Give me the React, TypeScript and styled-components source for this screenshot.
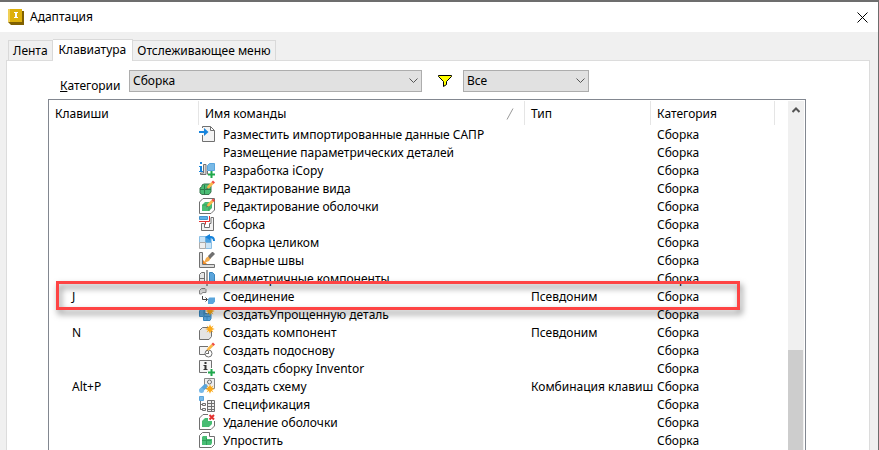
import React from "react";
import styled, { createGlobalStyle } from "styled-components";

const Global = createGlobalStyle`
  *, *::before, *::after { box-sizing: border-box; }
  html, body { margin: 0; height: 100%; overflow: hidden; }
  body, button, select { font: 12px/18px "Noto Sans", "Open Sans", Tahoma, sans-serif; color: #000; }
`;

const Window = styled.div`
  display: flex;
  flex-direction: column;
  height: 100vh;
  background: #f0f0f0;
  border-top: 2px solid #6d6d6d;
  border-right: 1px solid #6d6d6d;
`;

const TitleBar = styled.header`
  display: flex;
  align-items: center;
  gap: 6px;
  flex: none;
  height: 30px;
  padding: 0 9px 0 8px;
  background: #fff;
`;

const Title = styled.h1`
  flex: 1;
  margin: 0;
  font-size: 12px;
  font-weight: 400;
`;

const CloseButton = styled.button`
  display: grid;
  place-items: center;
  width: 14px;
  height: 16px;
  padding: 0;
  border: 0;
  background: none;
`;

const Body = styled.main`
  display: flex;
  flex-direction: column;
  flex: 1;
  min-height: 0;
  padding: 7px 8px 0 6px;
`;

const TabList = styled.div`
  display: flex;
  align-items: flex-end;
  flex: none;
  padding-left: 2px;
`;

const Tab = styled.button<{ $active?: boolean }>`
  height: ${(p) => (p.$active ? 22 : 20)}px;
  margin-bottom: ${(p) => (p.$active ? -1 : 0)}px;
  padding: ${(p) => (p.$active ? "0 6px 2px" : "1px 4px 0")};
  border: 1px solid #d9d9d9;
  border-bottom: 0;
  background: ${(p) => (p.$active ? "#fff" : "#f0f0f0")};
  white-space: nowrap;
  z-index: 1;
  & + & { border-left: 0; }
`;

const Panel = styled.section`
  display: flex;
  flex-direction: column;
  flex: 1;
  min-height: 0;
  padding: 9px 63px 0 41px;
  border: 1px solid #dcdcdc;
  border-bottom: 0;
  background: #fff;
`;

const Filters = styled.div`
  display: flex;
  align-items: center;
  flex: none;
  height: 22px;
  margin-bottom: 7px;
  padding-left: 12px;
`;

const FieldLabel = styled.label`
  width: 69px;
  padding-top: 10px;
`;

const SelectBox = styled.div<{ $width: number }>`
  display: grid;
  align-items: center;
  width: ${(p) => p.$width}px;
  & > * { grid-area: 1 / 1; }
  & > svg { justify-self: end; margin-right: 4px; pointer-events: none; }
`;

const Select = styled.select`
  width: 100%;
  height: 22px;
  padding: 0 3px;
  border: 1px solid #adadad;
  border-radius: 0;
  background: #e1e1e1;
  appearance: none;
`;

const FilterIcon = styled.svg`
  margin: 0 11px 0 16px;
`;

const ListBox = styled.div`
  display: flex;
  flex: 1;
  min-height: 0;
  padding: 1px 1px 0 0;
  border: 1px solid #828790;
  border-bottom: 0;
`;

const ListView = styled.div`
  flex: 1;
  min-width: 0;
  overflow: hidden;
`;

const Table = styled.table`
  width: 100%;
  table-layout: fixed;
  border-collapse: separate;
  border-spacing: 0;
`;

const Col = styled.col<{ $width?: number }>`
  width: ${(p) => (p.$width ? `${p.$width}px` : "auto")};
`;

const HeadCell = styled.th`
  height: 24px;
  padding: 2px 6px 0;
  border-right: 1px solid #e5e5e5;
  font-weight: 400;
  text-align: left;
  &:last-child { border-right: 0; }
`;

const HeadLabel = styled.span`
  display: flex;
  align-items: center;
  justify-content: space-between;
  padding-right: 4px;
`;

const Cell = styled.td<{ $indent?: boolean }>`
  position: relative;
  height: 18px;
  padding: 2px 0 0 ${(p) => (p.$indent ? 23 : 6)}px;
  line-height: 16px;
  white-space: nowrap;
`;

const CommandCell = styled(Cell)`
  padding: 0;
`;

const Command = styled.span`
  display: flex;
  align-items: center;
  gap: 8px;
  height: 18px;
`;

const CommandName = styled.span`
  padding-top: 2px;
`;

const Highlight = styled.span`
  position: absolute;
  z-index: 2;
  top: -6px;
  left: 7px;
  width: 684px;
  height: 29px;
  border: 3px solid #fe4444;
  filter: drop-shadow(2px 4px 3px rgba(0, 0, 0, 0.5));
  pointer-events: none;
`;

const ScrollBar = styled.div`
  display: flex;
  flex-direction: column;
  width: 16px;
  background: #f0f0f0;
`;

const ScrollButton = styled.button`
  display: grid;
  place-items: center;
  height: 17px;
  padding: 0;
  border: 0;
  background: none;
`;

const Track = styled.div`
  flex: 232;
`;

const Thumb = styled.div`
  flex: 100;
  width: 15px;
  background: #cdcdcd;
`;

const GREY = "#707070";
const GREEN = "#49bd74";
const BLUE = "#5aa5dc";

const Pencil = () => (
  <>
    <path d="M7.500 9l1-3 4-4 2 2-4 4z" fill="#f8b84c" />
    <path d="M12.500 2L14 .5l2 2L14.500 4z" fill="#f0483e" />
    <path d="M7 9.500l1-2 1 1z" fill="#555" />
  </>
);

const Star = ({ x, y }: { x: number; y: number }) => (
  <path
    transform={`translate(${x} ${y})`}
    d="M0-4.800L1.100-2 3.500-3.500 2-1.100 4.800 0 2 1.100 3.500 3.500 1.100 2 0 4.800-1.100 2-3.500 3.500-2 1.100-4.800 0-2-1.100-3.500-3.500-1.100-2z"
    fill="#fba919"
  />
);

const Plus = () => <path d="M9 12.500h7M12.500 9v7" stroke="#1fa84c" strokeWidth="2" fill="none" />;

const icons: Record<string, React.ReactNode> = {
  place: (
    <>
      <path d="M3.500 2V.5h8l4 4v11h-12V9M11.500.5v4h4" fill="#f4f4f4" stroke={GREY} />
      <path d="M0 5h5V2l4.500 4L5 10V7H0z" fill="#1784dc" />
    </>
  ),
  icopy: (
    <>
      <path d="M1 0h2v2H1zM0 4h3v5h1v1H0V9h1V5H0z" fill="#1784dc" />
      <path d="M4.500 2.500H7v10H1.500V11H4.500z" fill="#ddd" stroke={GREY} />
      <path d="M8.500 3.500l2-2h5v7h-7z" fill="#78b9e6" stroke={BLUE} />
      <path d="M8.500 9v3.500" stroke={GREY} />
      <Plus />
    </>
  ),
  editView: (
    <>
      <path d="M1 8l2-1.500V5l2-1h6l1 2v6l-2 2.500H3L1 13z" fill={GREEN} stroke="#39754e" />
      <path d="M1 9.500h4.500V14M5.500 9.500V5M6 9.500h6" fill="none" stroke="#2b7a49" />
      <Pencil />
    </>
  ),
  editShell: (
    <>
      <path d="M4 .5h11.500V12L12 15.500H.5V4z" fill="#fff" stroke={GREY} />
      <path d="M3 7l3-3h7v6l-3 3H3z" fill={GREEN} />
      <path d="M3.500 7H10v6" fill="none" stroke="#2f9f58" />
      <Pencil />
    </>
  ),
  assembly: (
    <>
      <path d="M.5.5h8v3h-8z" fill="#5fb1e8" stroke="#4594cc" />
      <path d="M0 5.500h6.500v3M10.500 0v5.500H6" fill="none" stroke="#e3312f" />
      <path d="M12 1.500h2.500v13h-12v-7h3v4h5v-4H12z" fill="#f2f2f2" stroke={GREY} />
    </>
  ),
  whole: (
    <>
      <path d="M.5 2.500h6v6h-6zM6.500 8.500h6v6h-6z" fill="#c9e3f6" stroke="#8bbfe4" />
      <path d="M6.500 2.500h6v6h-6z" fill="#4a9fdf" />
      <path d="M.5 8.500h6v6h-6z" fill="#eee" stroke="#aaa" />
      <path d="M6 3l5-3v2c3 0 5 1 5 5h-2c0-2-1-3-3-3v2z" fill="#1784dc" />
    </>
  ),
  weld: (
    <>
      <path d="M.5.5h3v12h12v3H.5z" fill="#ddd" stroke={GREY} />
      <path d="M4 12V8l4 4z" fill="#f08a24" />
      <path d="M5 11l2-5 3-2 2 2-2 3z" fill="#f2aa4c" />
      <path d="M9 4l4-4h1l2 2-5 5z" fill={GREY} />
    </>
  ),
  mirror: (
    <>
      <path d="M.5 4.500l2-2h3v11h-5zM1 8.500h4" fill="#e6e6e6" stroke={GREY} />
      <path d="M8 0v16" stroke="#444" />
      <path d="M10.500 2.500h3l2 2v9h-5z" fill={BLUE} stroke="#3a86bd" />
    </>
  ),
  joint: (
    <>
      <path d="M.5 6V2.500l2-2H6l1 1v3H3.500L2.500 6z" fill="#ddd" stroke="#888" />
      <path d="M3.500 8v3.500H8M6.500 9.500l2 2-2 2" fill="none" stroke="#444" />
      <path d="M9 11l1.500-1.500H16v4L14 16H9z" fill={BLUE} />
    </>
  ),
  simplified: (
    <>
      <path d="M.5 5l1-1.500H6v4h6v5l-1 2H4.500v-4h-4z" fill={BLUE} stroke="#3a86bd" />
      <path d="M5 10.500h6M5 4v6M8 10v5" stroke="#3a86bd" />
      <Star x={11} y={5} />
    </>
  ),
  component: (
    <>
      <path d="M.5 6.500l3-3h9v9l-2.500 3H.5z" fill="#e4e4e4" stroke={GREY} />
      <Star x={11} y={5} />
    </>
  ),
  substrate: (
    <>
      <path d="M9 4.500H.5v8H6" fill="#f4f4f4" stroke={GREY} />
      <circle cx="9.500" cy="11.500" r="3.500" fill="none" stroke={GREY} />
      <path d="M9.500 9v3M7 11.500h3" stroke={GREY} />
      <Pencil />
    </>
  ),
  inventor: (
    <>
      <path d="M8 12.500H.5V.5h12V8" fill="#f4f4f4" stroke={GREY} />
      <path d="M5.500 2h2v2h-2zM4.500 5h3v4h1v1h-4V9h1V6h-1z" fill="#333" />
      <Plus />
    </>
  ),
  scheme: (
    <>
      <path d="M5.500.5h10v10h-10z" fill="#eee" stroke="#888" />
      <circle cx="10.500" cy="4" r="2" fill="none" stroke={GREY} />
      <path d="M2.500 12l4-4" stroke={BLUE} strokeWidth="4" strokeLinecap="round" />
      <circle cx="2.500" cy="12.500" r="2.500" fill="#77b9e8" />
      <Star x={11} y={11} />
    </>
  ),
  bom: (
    <>
      <path d="M.5.5h4v4h-4z" fill="#77b9e8" stroke={BLUE} />
      <path d="M1.500 5v8.500H4M1.500 8.500H4" fill="none" stroke={GREY} />
      <path d="M3.500 7.500h3v2h-3zM3.500 12.500h3v2h-3zM8.500 4.500h7v11h-7zM8.500 7.500h7M8.500 10.500h7M8.500 13.500h7M12.500 4v11" fill="#eee" stroke={GREY} />
    </>
  ),
  removeShell: (
    <>
      <path d="M4 .5h11.500V12L12 15.500H.5V4z" fill="#fff" stroke={GREY} />
      <path d="M3 7l3-3h7v6l-3 3H3z" fill={GREEN} />
      <path d="M9 0h7v7H9z" fill="#fff" />
      <path d="M10.500 1l4.500 4.500M15 1l-4.500 4.500" stroke="#e3312f" strokeWidth="2" />
    </>
  ),
  simplify: (
    <>
      <path d="M3.500.5h7v4h5v8l-3 3H.5v-12z" fill="#fff" stroke={GREY} />
      <path d="M3 5l1-1h4v3h5v4l-1 2H3z" fill={GREEN} />
      <path d="M3 8.500h9M7.500 6v7" stroke="#2f9f58" />
    </>
  ),
};

const Icon = ({ name }: { name?: string }) => (
  <svg width="16" height="16" viewBox="0 0 16 16" aria-hidden="true">
    {name && icons[name]}
  </svg>
);

const Chevron = () => (
  <svg width="9" height="6" viewBox="0 0 9 6" fill="none" stroke="#555" aria-hidden="true">
    <path d="M.5.5l4 4 4-4" />
  </svg>
);

interface Row {
  icon?: string;
  name: string;
  keys?: string;
  type?: string;
  marked?: boolean;
}

const rows: Row[] = [
  { icon: "place", name: "Разместить импортированные данные САПР" },
  { name: "Размещение параметрических деталей" },
  { icon: "icopy", name: "Разработка iCopy" },
  { icon: "editView", name: "Редактирование вида" },
  { icon: "editShell", name: "Редактирование оболочки" },
  { icon: "assembly", name: "Сборка" },
  { icon: "whole", name: "Сборка целиком" },
  { icon: "weld", name: "Сварные швы" },
  { icon: "mirror", name: "Симметричные компоненты" },
  { icon: "joint", name: "Соединение", keys: "J", type: "Псевдоним", marked: true },
  { icon: "simplified", name: "СоздатьУпрощенную деталь" },
  { icon: "component", name: "Создать компонент", keys: "N", type: "Псевдоним" },
  { icon: "substrate", name: "Создать подоснову" },
  { icon: "inventor", name: "Создать сборку Inventor" },
  { icon: "scheme", name: "Создать схему", keys: "Alt+P", type: "Комбинация клавиш" },
  { icon: "bom", name: "Спецификация" },
  { icon: "removeShell", name: "Удаление оболочки" },
  { icon: "simplify", name: "Упростить" },
];

export default function App() {
  return (
    <>
      <Global />
      <Window>
        <TitleBar>
          <svg width="16" height="16" viewBox="0 0 16 16" aria-hidden="true">
            <path d="M2 2h14v14H3l-3-3z" fill="#806000" />
            <path d="M0 0h14v13H0z" fill="#ddb00c" />
            <path d="M0 0h2v13H0z" fill="#f0cf55" />
            <path d="M6 3h4v1H9v4h1v1H6V8h1V4H6z" fill="#fff" />
          </svg>
          <Title>Адаптация</Title>
          <CloseButton aria-label="Закрыть">
            <svg width="11" height="11" viewBox="0 0 11 11" stroke="#000" aria-hidden="true">
              <path d="M.5.5l10 10M10.500.5l-10 10" />
            </svg>
          </CloseButton>
        </TitleBar>
        <Body>
          <TabList role="tablist">
            <Tab role="tab">Лента</Tab>
            <Tab role="tab" $active aria-selected="true">Клавиатура</Tab>
            <Tab role="tab">Отслеживающее меню</Tab>
          </TabList>
          <Panel>
            <Filters>
              <FieldLabel htmlFor="category"><u>К</u>атегории</FieldLabel>
              <SelectBox $width={293}>
                <Select id="category"><option>Сборка</option></Select>
                <Chevron />
              </SelectBox>
              <FilterIcon width="14" height="12" viewBox="0 0 14 12" aria-hidden="true">
                <path d="M.5.5h13v1L8.500 6.500v3l-3 2v-5l-5-5z" fill="#ff0" stroke="#000" />
              </FilterIcon>
              <SelectBox $width={126}>
                <Select aria-label="Фильтр"><option>Все</option></Select>
                <Chevron />
              </SelectBox>
            </Filters>
            <ListBox>
              <ListView>
                <Table>
                  <colgroup>
                    <Col $width={150} />
                    <Col $width={326} />
                    <Col $width={126} />
                    <Col $width={124} />
                    <Col />
                  </colgroup>
                  <thead>
                    <tr>
                      <HeadCell>Клавиши</HeadCell>
                      <HeadCell>
                        <HeadLabel>
                          Имя команды
                          <svg width="8" height="12" viewBox="0 0 8 12" stroke="#999" aria-hidden="true">
                            <path d="M1 11.500L7 .5" />
                          </svg>
                        </HeadLabel>
                      </HeadCell>
                      <HeadCell>Тип</HeadCell>
                      <HeadCell>Категория</HeadCell>
                      <HeadCell as="td" />
                    </tr>
                  </thead>
                  <tbody>
                    {rows.map((row) => (
                      <tr key={row.name}>
                        <Cell $indent>
                          {row.keys}
                          {row.marked && <Highlight />}
                        </Cell>
                        <CommandCell>
                          <Command>
                            <Icon name={row.icon} />
                            <CommandName>{row.name}</CommandName>
                          </Command>
                        </CommandCell>
                        <Cell>{row.type}</Cell>
                        <Cell>Сборка</Cell>
                        <Cell />
                      </tr>
                    ))}
                  </tbody>
                </Table>
              </ListView>
              <ScrollBar>
                <ScrollButton aria-label="Прокрутить вверх">
                  <svg width="8" height="6" viewBox="0 0 8 6" fill="none" stroke="#555" strokeWidth="2" aria-hidden="true">
                    <path d="M.5 5L4 1.500 7.500 5" />
                  </svg>
                </ScrollButton>
                <Track />
                <Thumb />
              </ScrollBar>
            </ListBox>
          </Panel>
        </Body>
      </Window>
    </>
  );
}
